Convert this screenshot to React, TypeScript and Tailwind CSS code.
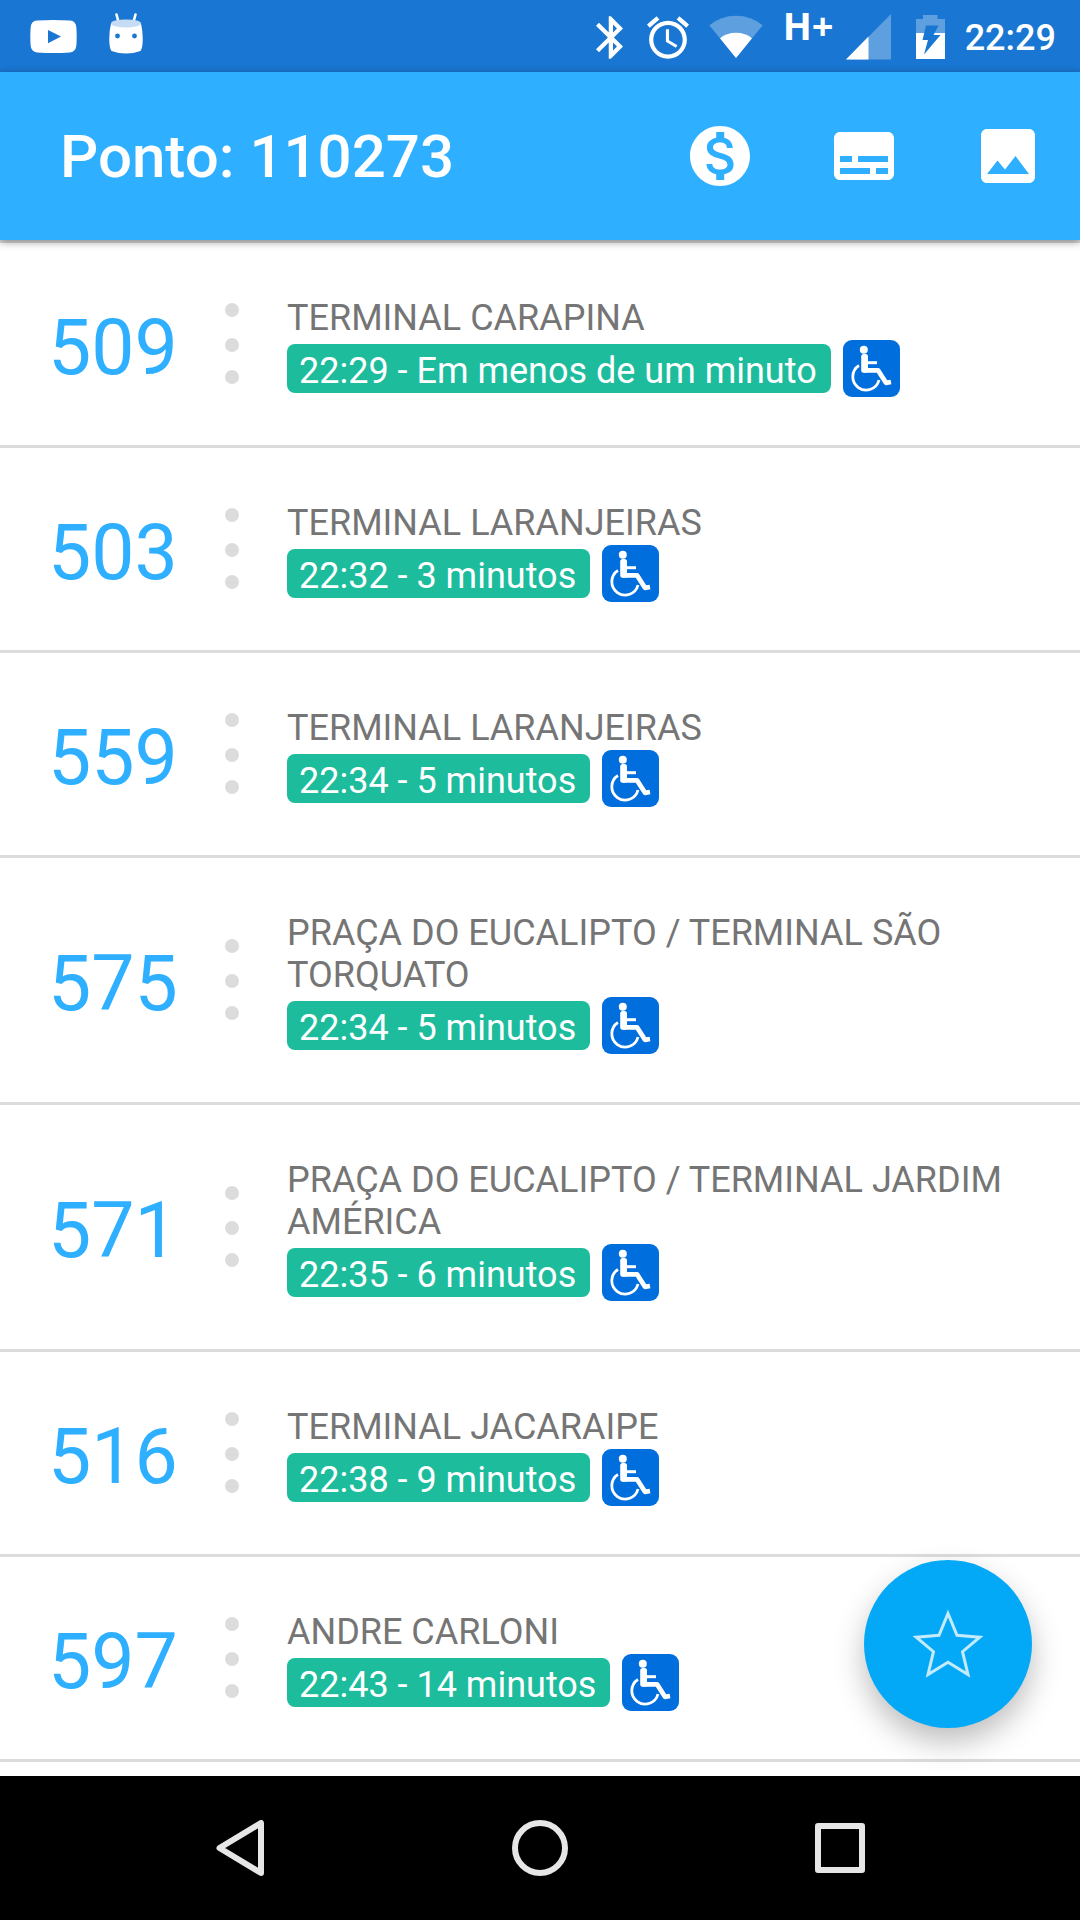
import React from "react";

type Arrival = { line: string; destination: string; eta: string };

const arrivals: Arrival[] = [
  { line: "509", destination: "TERMINAL CARAPINA", eta: "22:29 - Em menos de um minuto" },
  { line: "503", destination: "TERMINAL LARANJEIRAS", eta: "22:32 - 3 minutos" },
  { line: "559", destination: "TERMINAL LARANJEIRAS", eta: "22:34 - 5 minutos" },
  { line: "575", destination: "PRAÇA DO EUCALIPTO / TERMINAL SÃO TORQUATO", eta: "22:34 - 5 minutos" },
  { line: "571", destination: "PRAÇA DO EUCALIPTO / TERMINAL JARDIM AMÉRICA", eta: "22:35 - 6 minutos" },
  { line: "516", destination: "TERMINAL JACARAIPE", eta: "22:38 - 9 minutos" },
  { line: "597", destination: "ANDRE CARLONI", eta: "22:43 - 14 minutos" },
];

function StatusBar() {
  return (
    <div className="flex h-[72px] items-center justify-between bg-[#1976d2] pr-6 pl-[30px] text-white">
      <div className="flex items-center gap-8">
        <svg className="h-[33px] w-[47px]" viewBox="0 0 47 33" fill="currentColor" aria-label="YouTube">
          <path
            fillRule="evenodd"
            d="M7 .6Q23.500 -.6 40 .6 46 1 46.400 8 47 16.500 46.400 25 46 32 40 32.400 23.500 33.400 7 32.400 1 32 .6 25 0 16.500 .6 8 1 1 7 .6ZM18 10V23.200L31 16.500Z"
          />
        </svg>
        <svg className="mb-1.5 h-[41px] w-[34px]" viewBox="0 0 34 41" fill="currentColor" aria-label="Android">
          <path d="M7.500 1.500 9.500 9M26.500 1.500 24.500 9" stroke="currentColor" strokeWidth="2.600" strokeLinecap="round" />
          <path d="M2 10.500Q17 16.500 32 10.500 34 19 33.700 28 33.500 35.500 31.500 38 17 43 2.500 38 .5 35.500 .3 28 0 19 2 10.500Z" />
          <ellipse cx="17" cy="10.400" rx="15" ry="4" fill="#c6dcf4" />
          <circle cx="8.500" cy="23" r="2.400" fill="#1976d2" />
          <circle cx="25.500" cy="23" r="2.400" fill="#1976d2" />
        </svg>
      </div>
      <div className="flex items-center pt-0.5">
        <svg className="h-[43px] w-[27px]" viewBox="5 2 12.710 20" fill="currentColor" aria-label="Bluetooth">
          <path d="M17.710 7.710L12 2h-1v7.590L6.410 5 5 6.410 10.590 12 5 17.590 6.410 19 11 14.410V22h1l5.710-5.710-4.300-4.290 4.300-4.290zM13 5.830l1.880 1.880L13 9.590V5.830zm1.880 10.460L13 18.170v-3.760l1.880 1.880z" />
        </svg>
        <svg className="ml-6 h-[43px] w-[42px]" viewBox="2 1.860 20 20.140" fill="currentColor" aria-label="Alarme">
          <path d="M22 5.720l-4.600-3.860-1.290 1.530 4.600 3.860L22 5.720zM7.880 3.390L6.600 1.860 2 5.710l1.290 1.530 4.590-3.850zM12.500 8H11v6l4.750 2.850.75-1.230-4-2.370V8zM12 4c-4.970 0-9 4.030-9 9s4.020 9 9 9c4.970 0 9-4.030 9-9s-4.030-9-9-9zm0 16c-3.870 0-7-3.130-7-7s3.130-7 7-7 7 3.130 7 7-3.130 7-7 7z" />
        </svg>
        <svg className="ml-5 h-[44px] w-[54px]" viewBox="0 0 54 44" fill="currentColor" aria-label="Wi-Fi">
          <path d="M27 43 .3 10.300Q12 .8 27 .8T53.700 10.300Z" opacity=".3" />
          <path d="M27 43 11 23.300Q17.500 17.800 27 17.800T43 23.300Z" />
        </svg>
        <span className="mb-6 ml-5 w-[49px] font-['Noto_Sans',sans-serif] text-[38px] leading-10 font-bold">H+</span>
        <svg className="ml-3.5 h-[46px] w-[46px]" viewBox="0 0 46 46" fill="currentColor" aria-label="Sinal">
          <path d="M45 0V45.500H0Z" opacity=".3" />
          <path d="M22.500 22.500V45.500H0Z" />
        </svg>
        <svg className="ml-6 h-[44px] w-[29px]" viewBox="0 0 29 44" fill="currentColor" aria-label="Bateria carregando">
          <path d="M7 0H21.500V4H29V18H0V4H7Z" opacity=".3" />
          <path d="M0 18H29V44H0Z" />
          <path d="M10 10.500H22.500L17.500 20H24.500L8 39.500 12 25H6.500Z" fill="#1976d2" />
        </svg>
        <time className="ml-5 pt-0.5 text-[36px] leading-none font-medium">22:29</time>
      </div>
    </div>
  );
}

const actions = [
  {
    label: "Tarifas",
    d: "M12 2C6.480 2 2 6.480 2 12s4.480 10 10 10 10-4.480 10-10S17.520 2 12 2zm1.410 16.090V20h-2.670v-1.930c-1.710-.36-3.160-1.460-3.270-3.400h1.960c.1 1.050.82 1.870 2.650 1.870 1.960 0 2.400-.98 2.400-1.590 0-.83-.44-1.610-2.670-2.140-2.480-.6-4.180-1.620-4.180-3.670 0-1.720 1.390-2.840 3.110-3.210V4h2.670v1.950c1.860.45 2.790 1.860 2.850 3.390H14.300c-.05-1.110-.64-1.870-2.220-1.870-1.500 0-2.400.68-2.400 1.640 0 .84.65 1.390 2.670 1.910s4.180 1.390 4.180 3.910c-.01 1.830-1.380 2.830-3.120 3.160z",
  },
  {
    label: "Detalhes",
    d: "M20 4H4c-1.100 0-2 .9-2 2v12c0 1.100.9 2 2 2h16c1.100 0 2-.9 2-2V6c0-1.100-.9-2-2-2zM4 12h4v2H4v-2zm10 6H4v-2h10v2zm6 0h-4v-2h4v2zm0-4H10v-2h10v2z",
  },
  {
    label: "Imagem",
    d: "M21 19V5c0-1.100-.9-2-2-2H5c-1.100 0-2 .9-2 2v14c0 1.100.9 2 2 2h14c1.100 0 2-.9 2-2zM8.500 13.500l2.500 3.010L14.500 12l4.500 6H5l3.500-4.500z",
  },
];

function AppBar() {
  return (
    <header className="relative z-10 flex h-[168px] items-center justify-between bg-[#2eafff] pl-[60px] text-white shadow-[0_2px_8px_rgba(0,0,0,0.4)]">
      <h1 className="pt-0.5 text-[60px] leading-none font-medium">Ponto: 110273</h1>
      <div className="flex h-full">
        {actions.map((a) => (
          <button key={a.label} type="button" aria-label={a.label} className="flex w-36 items-center justify-center">
            <svg className="size-[72px]" viewBox="0 0 24 24" fill="currentColor" aria-hidden="true">
              <path d={a.d} />
            </svg>
          </button>
        ))}
      </div>
    </header>
  );
}

function Wheelchair() {
  return (
    <svg className="size-[57px] shrink-0" viewBox="0 0 57 57" role="img" aria-label="Acessível">
      <rect width="57" height="57" rx="9" fill="#006edc" />
      <g fill="none" stroke="#fff">
        <path d="M16 25.500A13.300 13.300 0 1 0 36 40" strokeWidth="2.800" />
        <path d="M21.500 17V30.300H35L43 42.800 48 42" strokeWidth="4.800" strokeLinejoin="round" />
        <path d="M22 22.700H34" strokeWidth="3" />
      </g>
      <rect x="18.200" y="14" width="6.800" height="18.700" rx="2.500" fill="#fff" />
      <circle cx="20.800" cy="9.800" r="4" fill="#fff" />
    </svg>
  );
}

function ArrivalRow({ line, destination, eta }: Arrival) {
  return (
    <li className="flex items-center border-t-3 border-[#dcdcdc]">
      <span className="w-[225px] shrink-0 pt-2 pl-12 text-[77px] leading-none text-[#2eafff]">{line}</span>
      <span className="flex shrink-0 flex-col pb-0.5" aria-hidden="true">
        <i className="mb-[21px] size-3.5 rounded-full bg-[#dcdcdc]" />
        <i className="mb-[18px] size-3.5 rounded-full bg-[#dcdcdc]" />
        <i className="size-3.5 rounded-full bg-[#dcdcdc]" />
      </span>
      <div className="flex-1 pt-[54px] pr-12 pb-12 pl-12">
        <p className="text-[36px] leading-[42px] text-[#757575]">{destination}</p>
        <div className="mt-px flex items-center gap-3">
          <span className="rounded-lg bg-[#1cbc9c] pt-1.5 pr-3.5 pb-px pl-3 text-[36px] leading-[42px] whitespace-nowrap text-white">{eta}</span>
          <Wheelchair />
        </div>
      </div>
    </li>
  );
}

function NavBar() {
  return (
    <nav className="flex h-36 justify-around bg-black px-[90px] text-[#e6e6e6]">
      <button type="button" aria-label="Voltar" className="flex flex-1 items-center justify-center">
        <svg className="h-14 w-12" viewBox="0 0 48 56" fill="none" stroke="currentColor" strokeWidth="6" strokeLinejoin="round" aria-hidden="true">
          <path d="M45 3V53L3.500 28Z" />
        </svg>
      </button>
      <button type="button" aria-label="Início" className="flex flex-1 items-center justify-center">
        <svg className="size-14" viewBox="0 0 56 56" fill="none" stroke="currentColor" strokeWidth="6" aria-hidden="true">
          <circle cx="28" cy="28" r="25" />
        </svg>
      </button>
      <button type="button" aria-label="Recentes" className="flex flex-1 items-center justify-center">
        <svg className="size-[50px]" viewBox="0 0 50 50" fill="none" stroke="currentColor" strokeWidth="6" strokeLinejoin="round" aria-hidden="true">
          <path d="M3 3H47V47H3Z" />
        </svg>
      </button>
    </nav>
  );
}

export default function App() {
  return (
    <div className="flex min-h-screen flex-col bg-white font-[Roboto,sans-serif]">
      <StatusBar />
      <AppBar />
      <main className="relative flex-1">
        <ul className="border-b-3 border-[#dcdcdc]">
          {arrivals.map((a) => (
            <ArrivalRow key={a.line} {...a} />
          ))}
        </ul>
        <button
          type="button"
          aria-label="Adicionar aos favoritos"
          className="absolute right-12 bottom-12 flex size-[168px] items-center justify-center rounded-full bg-[#03a9f6] shadow-[0_14px_30px_rgba(0,0,0,0.26)]"
        >
          <svg className="size-[72px]" viewBox="0 0 72 72" fill="none" stroke="#c4ebfd" strokeWidth="3" aria-hidden="true">
            <path d="M36 5.500 45 27.300 67.800 29.200 50.500 43.700 56 66.500 36 54.300 16 66.500 21.500 43.700 4.200 29.200 27 27.300Z" />
          </svg>
        </button>
      </main>
      <NavBar />
    </div>
  );
}
